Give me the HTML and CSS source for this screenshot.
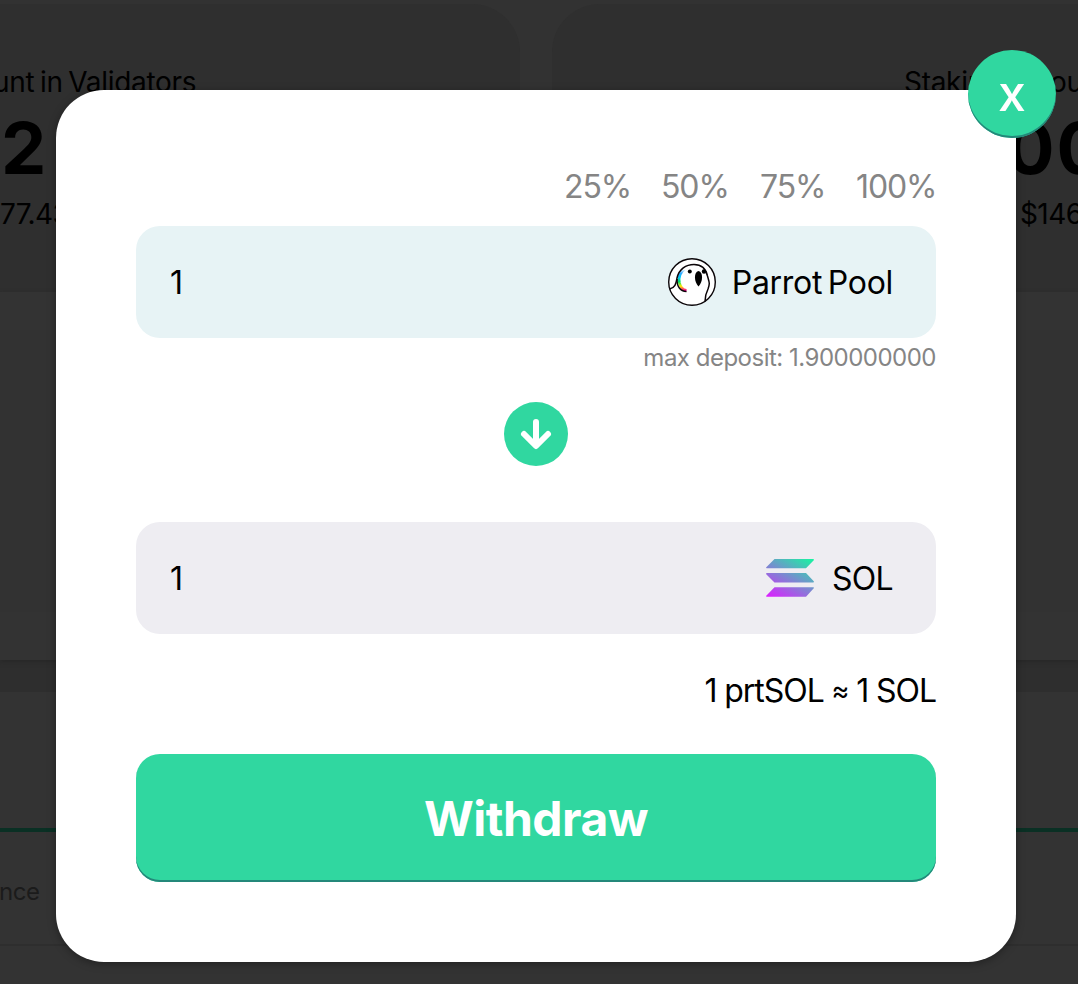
FILE: index.html
```html
<!DOCTYPE html>
<html lang="en">
<head>
<meta charset="utf-8">
<title>Withdraw</title>
<link rel="stylesheet" href="styles.css">
</head>
<body>
<div class="page">
  <section class="stats">
    <div class="stat stat-left">
      <div class="stat-title">unt in Validators</div>
      <div class="stat-value">2</div>
      <div class="stat-sub">77.43</div>
    </div>
    <div class="stat stat-right">
      <div class="stat-title"><span class="word-staking">Staking</span><span>ount</span></div>
      <div class="stat-value">00</div>
      <div class="stat-sub">$146</div>
    </div>
  </section>
  <section class="panel"><div class="chart"></div></section>
  <section class="table">
    <div class="tabs"></div>
    <div class="table-head">nce</div>
    <div class="table-row"></div>
  </section>
</div>
<main class="modal">
  <button class="close"><span>x</span></button>
  <div class="percents"><span class="p25">25%</span><span class="p50">50%</span><span class="p75">75%</span><span class="p100">100%</span></div>
  <div class="field field-from">
    <span class="amount">1</span>
    <svg class="parrot" viewBox="0 0 48 48">
      <defs><linearGradient id="plume" gradientUnits="userSpaceOnUse" x1="18" y1="9" x2="18" y2="33.500"><stop offset="0.1" stop-color="#fff"/><stop offset="0.26" stop-color="#30a8ff"/><stop offset="0.42" stop-color="#00c8ff"/><stop offset="0.6" stop-color="#00e060"/><stop offset="0.78" stop-color="#fff000"/><stop offset="0.95" stop-color="#ff0090"/></linearGradient></defs>
      <circle cx="24" cy="24" r="23.3" fill="#fff" stroke="#0b0508" stroke-width="1.4"/>
      <path d="M17 10.500C12 14 10.200 18 11.300 24.500C12.300 29 15 32 18.500 32.300" fill="none" stroke="url(#plume)" stroke-width="2.800"/>
      <path d="M1.500 31C7 30 8 26 9 20C11 11 18 6.500 26 6.500C34 6.500 38 11 39.500 18C41.500 25 42 25 40 31C37 37 37 39 37 43.500" fill="none" stroke="#0b0508" stroke-width="1.500"/>
      <path d="M9.200 21C8.500 28 12 33.200 18.500 33.500" fill="none" stroke="#0b0508" stroke-width="1.400"/>
      <circle cx="21.800" cy="13.500" r="2"/><circle cx="36" cy="13.500" r="2.200"/>
      <path d="M30.500 13C25.500 14 26 24 30.500 28.500C35 24 35.500 14 30.500 13Z"/>
    </svg>
    <span class="token token-pool">Parrot Pool</span>
  </div>
  <div class="hint"><span>max deposit: 1.900000000</span></div>
  <svg class="arrow" viewBox="0 0 64 64"><circle cx="32" cy="32" r="32" fill="#30d7a0"/><path d="M32 20V43M20 32L32 44L44 32" fill="none" stroke="#fff" stroke-width="6" stroke-linecap="round" stroke-linejoin="round"/></svg>
  <div class="field field-to">
    <span class="amount">1</span>
    <svg class="sol" viewBox="0 0 48 38">
      <defs><linearGradient id="sol" gradientUnits="userSpaceOnUse" x1="40" y1="-4" x2="13" y2="44"><stop offset="0" stop-color="#17f5a1"/><stop offset="1" stop-color="#dc1fff"/></linearGradient></defs>
      <path d="M8.500 0H47.500L48 1L40 9.300H.5L0 8.500ZM.5 14H40L48 22.500L47.500 23.500H8.500L0 15ZM8.500 28.200H47.500L48 29L40 37.700H.5L0 37Z" fill="url(#sol)"/>
    </svg>
    <span class="token token-sol">SOL</span>
  </div>
  <div class="rate"><span>1 prtSOL <span class="approx">≈</span> 1 SOL</span></div>
  <button class="submit"><span>Withdraw</span></button>
</main>
</body>
</html>
```
FILE: styles.css
```css
* { box-sizing: border-box; }
body { margin: 0; width: 1078px; height: 984px; overflow: hidden; position: relative; font-family: Inter, "Liberation Sans", sans-serif; color: #000; }
button { border: 0; padding: 0; font-family: inherit; }
span { white-space: nowrap; }
.page { height: 984px; background: #323232; padding-top: 4px; overflow: hidden; }
.stats { display: flex; gap: 32px; height: 288px; }
.stat { background: #2f2f2f; padding-top: 60px; overflow: hidden; white-space: nowrap; }
.stat-left { width: 520px; border-radius: 0 48px 0 0; }
.stat-right { width: 526px; border-radius: 48px 0 0 0; }
.stat-title { height: 36px; line-height: 36px; font-size: 28px; letter-spacing: -0.3px; word-spacing: -2px; }
.stat-left .stat-title { text-indent: -7px; }
.stat-right .stat-title { padding-left: 352px; display: flex; }
.word-staking { width: 146px; flex: none; }
.stat-value { height: 96px; line-height: 96px; font-size: 72px; font-weight: 700; letter-spacing: 2px; }
.stat-left .stat-value { padding-left: 1px; }
.stat-right .stat-value { padding-left: 454px; }
.stat-sub { height: 36px; line-height: 36px; font-size: 28px; letter-spacing: -0.6px; }
.stat-right .stat-sub { padding-left: 468px; }
.panel { height: 368px; padding: 38px 0 48px; background: #333; box-shadow: 0 2px 4px #282828; position: relative; }
.chart { height: 282px; background: #323232; }
.table { height: 324px; border-top: 32px solid #2e2e2e; background: #333; }
.tabs { height: 140px; border-bottom: 4px solid #0a3024; }
.table-head { height: 114px; line-height: 120px; font-size: 24px; color: #1b1b1b; border-bottom: 2px solid #2e2e2e; letter-spacing: -0.5px; text-indent: -1px; }
.modal { position: absolute; left: 56px; top: 90px; width: 960px; height: 872px; padding: 80px; border-radius: 48px; background: #fff; box-shadow: 0 2px 8px rgba(0,0,0,.35); display: flex; flex-direction: column; }
.close { position: absolute; left: 912px; top: -40px; width: 88px; height: 88px; border-radius: 50%; background: #30d7a0; box-shadow: inset 0 -2px 0 #24887a; color: #fff; font-size: 50px; line-height: 84px; padding-bottom: 3px; font-weight: 500; }
.percents { height: 56px; line-height: 34px; font-size: 32px; color: #858585; display: flex; justify-content: flex-end; letter-spacing: -1.1px; }
.p25 { width: 97px; }
.p50 { width: 99px; }
.p75 { width: 96px; }
.p100 { width: 80px; }
.field { height: 112px; flex: none; border-radius: 24px; display: flex; align-items: center; padding: 0 43px 0 34px; font-size: 32px; }
.field-from { background: #e7f3f5; }
.field-to { background: #eeedf2; margin-top: 56px; }
.amount { flex: 1; }
.parrot { width: 48px; height: 48px; margin-right: 16px; }
.sol { width: 48px; height: 38px; margin-right: 18px; }
.token-pool { letter-spacing: -0.3px; word-spacing: -3px; }
.token-sol { letter-spacing: -0.7px; }
.hint { height: 64px; line-height: 39px; font-size: 24px; color: #858585; text-align: right; letter-spacing: -0.5px; }
.arrow { width: 64px; height: 64px; align-self: center; flex: none; }
.rate { height: 120px; line-height: 114px; font-size: 32px; text-align: right; letter-spacing: -1px; word-spacing: -0.3px; }
.approx { font-size: 27px; line-height: 1; vertical-align: 2px; }
.submit { height: 128px; border-radius: 24px; background: #30d7a0; box-shadow: inset 0 -2px 0 #24887a; color: #fff; font-size: 48px; font-weight: 700; letter-spacing: -0.5px; }
```
